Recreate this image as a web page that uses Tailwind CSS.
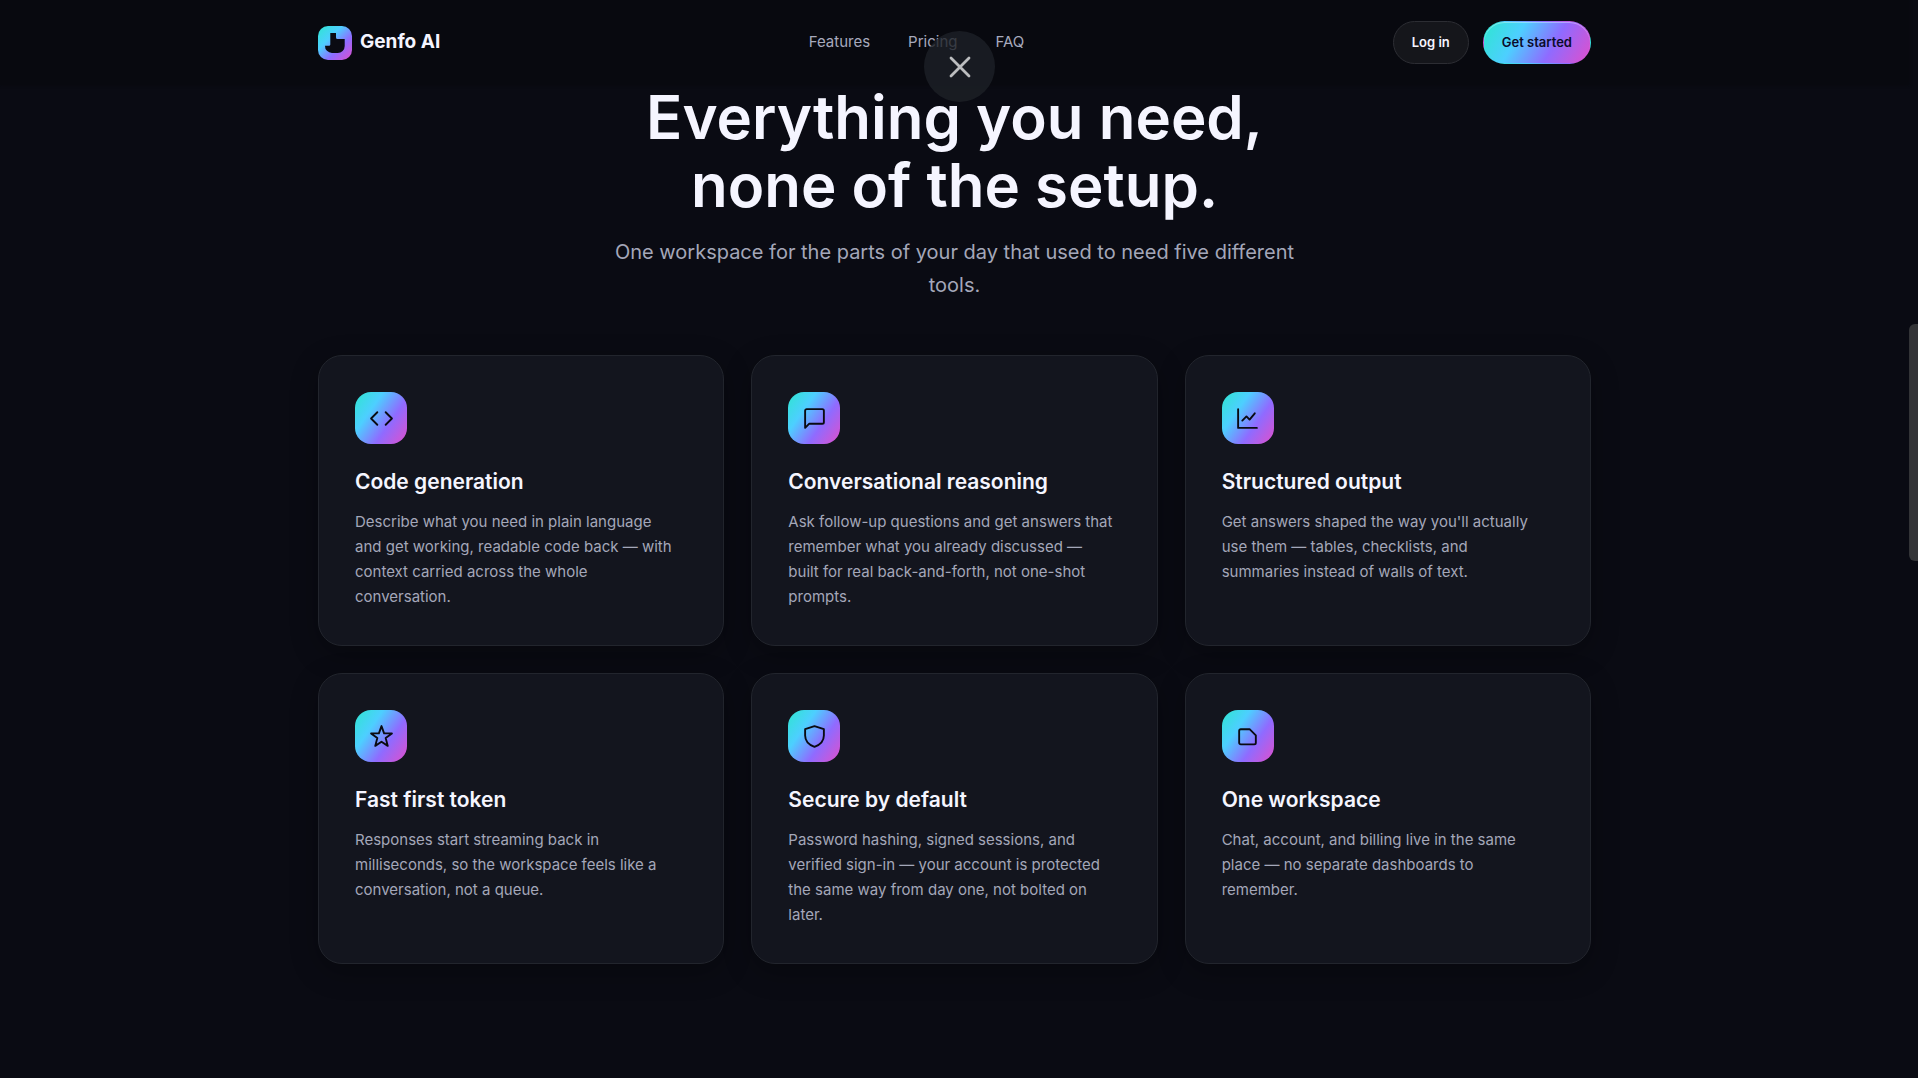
<!DOCTYPE html>
<html lang="en">
<head>
<meta charset="utf-8">
<meta name="viewport" content="width=device-width, initial-scale=1">
<title>Genfo AI</title>
<script src="https://cdn.jsdelivr.net/npm/@tailwindcss/browser@4"></script>
</head>
<body class="relative h-screen overflow-hidden bg-[#0a0b13] pr-[9px] font-['Inter',sans-serif] text-[#f5f5ff]">

<header class="bg-[#08090f] px-6 shadow-[0_0_3px_0_#08090f]">
  <div class="mx-auto flex max-w-[1273px] items-center justify-between py-[21px]">
    <a href="#" class="flex items-center gap-2 text-[19px] font-bold">
      <svg class="size-[34px]" viewBox="0 0 34 34" aria-hidden="true">
        <defs><linearGradient id="brand" x1="0" y1="0" x2="1" y2="1"><stop offset="0" stop-color="#2ee6d0"/><stop offset=".35" stop-color="#4dcfff"/><stop offset=".65" stop-color="#8f6bff"/><stop offset="1" stop-color="#e04fcb"/></linearGradient></defs>
        <rect width="34" height="34" rx="10" fill="url(#brand)"/>
        <path fill="#0a0b12" d="M12.3 7H18v4.500q0 1.500 1.500 1.500h7.200v7a7 7 0 0 1-7 7H14a7 7 0 0 1-7-7.300h4q1.300 0 1.300-1.300z"/>
      </svg>
      Genfo AI
    </a>
    <nav class="flex gap-[38px] text-[15px] text-[#a7aabd]">
      <a href="#features">Features</a>
      <a href="#pricing">Pricing</a>
      <a href="#faq">FAQ</a>
    </nav>
    <div class="flex gap-[14px] text-[13px] font-semibold">
      <button type="button" class="h-[43px] rounded-full border border-[#2c2d33] bg-[#15161b] px-[18px]">Log in</button>
      <button type="button" class="h-[43px] rounded-full border border-transparent bg-[linear-gradient(120deg,#2ee6d0_0%,#4dcfff_32%,#8f6bff_64%,#e04fcb_100%)] px-[18px] text-[#0b0b2a] shadow-[inset_0_1px_0_rgba(255,255,255,0.35)]">Get started</button>
    </div>
  </div>
</header>

<main id="features" class="-mt-0.5 px-6">
  <div class="mx-auto max-w-[700px] text-center">
    <h1 class="text-[60px] leading-[68px] font-semibold">Everything you need,<br>none of the setup.</h1>
    <p class="mt-[17px] text-xl leading-[33px] text-[#a4a7b9]">One workspace for the parts of your day that used to need five different<br>tools.</p>
  </div>

  <div class="mx-auto mt-[53px] grid max-w-[1273px] grid-cols-3 gap-[27px]">
    <article class="rounded-3xl border border-[#22252d] bg-[#13151e] p-9 shadow-[0_8px_28px_rgba(0,0,0,0.28)]">
      <div class="flex size-[52px] items-center justify-center rounded-2xl bg-[linear-gradient(125deg,#2ee6d0_0%,#4dcfff_32%,#8f6bff_64%,#e04fcb_100%)]">
        <svg class="size-[25px] fill-none stroke-[#0a0b12] stroke-[1.8]" viewBox="0 0 24 24" stroke-linecap="round" stroke-linejoin="round" aria-hidden="true"><path d="M8 6l-6 6 6 6M16 6l6 6-6 6"/></svg>
      </div>
      <h2 class="mt-6 mb-[13px] text-[21px] leading-7 font-semibold">Code generation</h2>
      <p class="text-[15px] leading-[25px] text-[#a4a7b9]">Describe what you need in plain language<br>and get working, readable code back — with<br>context carried across the whole<br>conversation.</p>
    </article>

    <article class="rounded-3xl border border-[#22252d] bg-[#13151e] p-9 shadow-[0_8px_28px_rgba(0,0,0,0.28)]">
      <div class="flex size-[52px] items-center justify-center rounded-2xl bg-[linear-gradient(125deg,#2ee6d0_0%,#4dcfff_32%,#8f6bff_64%,#e04fcb_100%)]">
        <svg class="size-[25px] fill-none stroke-[#0a0b12] stroke-[1.8]" viewBox="0 0 24 24" stroke-linecap="round" stroke-linejoin="round" aria-hidden="true"><path d="M21 15.500a1.500 1.500 0 0 1-1.500 1.500H7l-4 4V4.500A1.500 1.500 0 0 1 4.500 3h15A1.500 1.500 0 0 1 21 4.500z"/></svg>
      </div>
      <h2 class="mt-6 mb-[13px] text-[21px] leading-7 font-semibold">Conversational reasoning</h2>
      <p class="text-[15px] leading-[25px] text-[#a4a7b9]">Ask follow-up questions and get answers that<br>remember what you already discussed —<br>built for real back-and-forth, not one-shot<br>prompts.</p>
    </article>

    <article class="rounded-3xl border border-[#22252d] bg-[#13151e] p-9 shadow-[0_8px_28px_rgba(0,0,0,0.28)]">
      <div class="flex size-[52px] items-center justify-center rounded-2xl bg-[linear-gradient(125deg,#2ee6d0_0%,#4dcfff_32%,#8f6bff_64%,#e04fcb_100%)]">
        <svg class="size-[25px] fill-none stroke-[#0a0b12] stroke-[1.8]" viewBox="0 0 24 24" stroke-linecap="round" stroke-linejoin="round" aria-hidden="true"><path d="M3 3v18h18M7 14l4-4 3 3 5-6"/></svg>
      </div>
      <h2 class="mt-6 mb-[13px] text-[21px] leading-7 font-semibold">Structured output</h2>
      <p class="text-[15px] leading-[25px] text-[#a4a7b9]">Get answers shaped the way you'll actually<br>use them — tables, checklists, and<br>summaries instead of walls of text.</p>
    </article>

    <article class="rounded-3xl border border-[#22252d] bg-[#13151e] p-9 shadow-[0_8px_28px_rgba(0,0,0,0.28)]">
      <div class="flex size-[52px] items-center justify-center rounded-2xl bg-[linear-gradient(125deg,#2ee6d0_0%,#4dcfff_32%,#8f6bff_64%,#e04fcb_100%)]">
        <svg class="size-[25px] fill-none stroke-[#0a0b12] stroke-[1.8]" viewBox="0 0 24 24" stroke-linecap="round" stroke-linejoin="round" aria-hidden="true"><path d="M12 2l2.500 7H22l-6 4.500L18 21l-6-4-6 4 2-7.500L2 9h7.500z"/></svg>
      </div>
      <h2 class="mt-6 mb-[13px] text-[21px] leading-7 font-semibold">Fast first token</h2>
      <p class="text-[15px] leading-[25px] text-[#a4a7b9]">Responses start streaming back in<br>milliseconds, so the workspace feels like a<br>conversation, not a queue.</p>
    </article>

    <article class="rounded-3xl border border-[#22252d] bg-[#13151e] p-9 shadow-[0_8px_28px_rgba(0,0,0,0.28)]">
      <div class="flex size-[52px] items-center justify-center rounded-2xl bg-[linear-gradient(125deg,#2ee6d0_0%,#4dcfff_32%,#8f6bff_64%,#e04fcb_100%)]">
        <svg class="size-[25px] fill-none stroke-[#0a0b12] stroke-[1.8]" viewBox="0 0 24 24" stroke-linecap="round" stroke-linejoin="round" aria-hidden="true"><path d="M12 2l9 3v6c0 5.500-3.800 9-9 11-5.200-2-9-5.500-9-11V5z"/></svg>
      </div>
      <h2 class="mt-6 mb-[13px] text-[21px] leading-7 font-semibold">Secure by default</h2>
      <p class="text-[15px] leading-[25px] text-[#a4a7b9]">Password hashing, signed sessions, and<br>verified sign-in — your account is protected<br>the same way from day one, not bolted on<br>later.</p>
    </article>

    <article class="rounded-3xl border border-[#22252d] bg-[#13151e] p-9 shadow-[0_8px_28px_rgba(0,0,0,0.28)]">
      <div class="flex size-[52px] items-center justify-center rounded-2xl bg-[linear-gradient(125deg,#2ee6d0_0%,#4dcfff_32%,#8f6bff_64%,#e04fcb_100%)]">
        <svg class="size-[25px] fill-none stroke-[#0a0b12] stroke-[1.8]" viewBox="0 0 24 24" stroke-linecap="round" stroke-linejoin="round" aria-hidden="true"><path d="M5.500 5H14l6 6v7a1.500 1.500 0 0 1-1.500 1.500h-13A1.500 1.500 0 0 1 4 18V6.500A1.500 1.500 0 0 1 5.500 5z"/></svg>
      </div>
      <h2 class="mt-6 mb-[13px] text-[21px] leading-7 font-semibold">One workspace</h2>
      <p class="text-[15px] leading-[25px] text-[#a4a7b9]">Chat, account, and billing live in the same<br>place — no separate dashboards to<br>remember.</p>
    </article>
  </div>
</main>

<!-- Floating close control -->
<button type="button" aria-label="Close" class="absolute top-[31px] left-1/2 ml-[-35px] flex size-[71px] items-center justify-center rounded-full bg-[#1d2027]/80">
  <svg class="size-6 fill-none stroke-[#bcbdbf] stroke-[2.8]" viewBox="0 0 24 24" stroke-linecap="round" aria-hidden="true"><path d="M3 3l18 18M21 3L3 21"/></svg>
</button>

<!-- Scroll thumb -->
<div class="absolute top-[324px] right-0 h-[237px] w-[9px] rounded-l-md bg-[#333437]"></div>

</body>
</html>
